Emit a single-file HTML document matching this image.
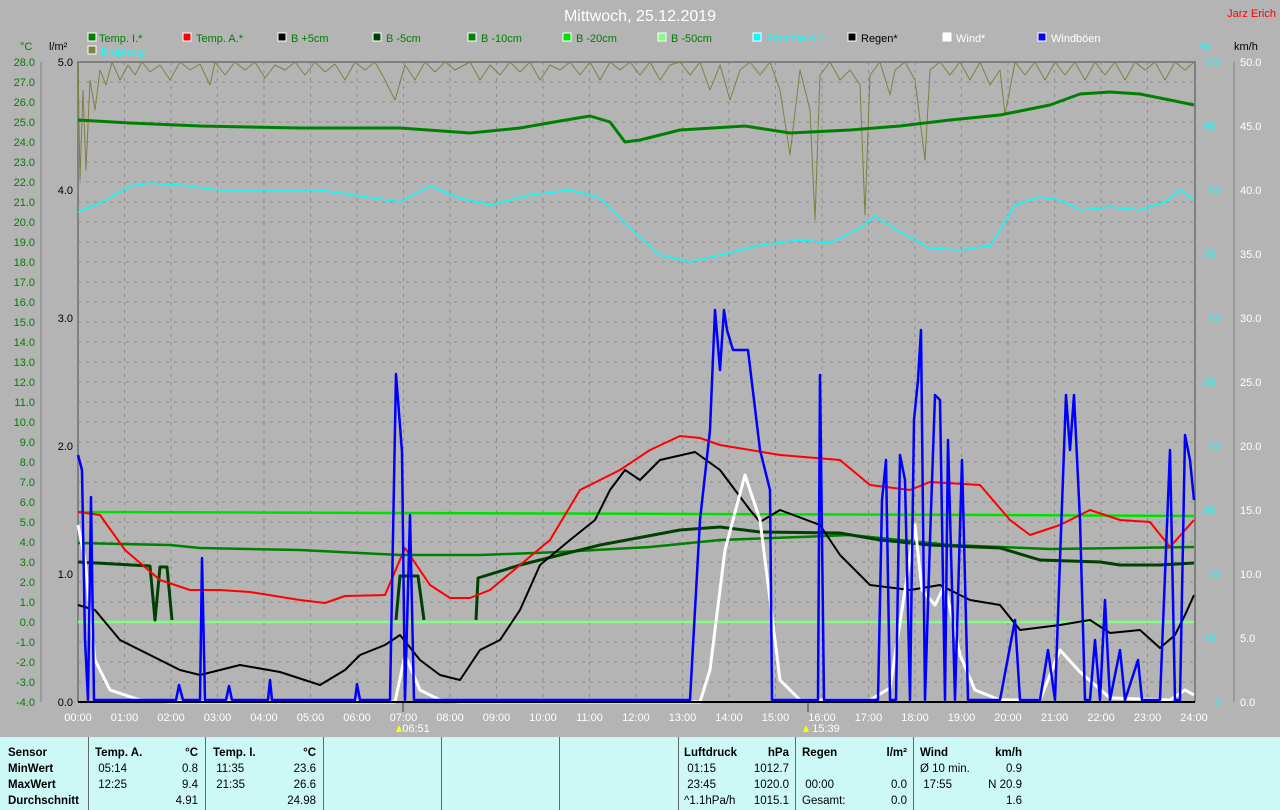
<!DOCTYPE html>
<html><head><meta charset="utf-8"><style>
body{margin:0;width:1280px;height:810px;background:#b4b4b4;overflow:hidden;font-family:"Liberation Sans",sans-serif;position:relative}
svg{position:absolute;left:0;top:0}
.tbl{position:absolute;left:0;top:737px;width:1280px;height:73px;background:#ccf9f5;font-size:11.5px;color:#000}
.tbl div{position:absolute}
.sep{top:0;height:73px;width:1px;background:#666}
b{font-weight:bold}
</style></head><body>
<svg width="1280" height="810" font-family="Liberation Sans, sans-serif">
<text x="640" y="21" fill="#fff" font-size="16" text-anchor="middle">Mittwoch, 25.12.2019</text>
<text x="1276" y="17" fill="#f00" font-size="11" text-anchor="end">Jarz Erich</text>
<g font-size="11">
<rect x="88" y="33" width="8" height="8" fill="#008000" stroke="#fff"/><text x="99" y="42" fill="#008000">Temp. I.*</text>
<rect x="183" y="33" width="8" height="8" fill="#f00" stroke="#fff"/><text x="196" y="42" fill="#008000">Temp. A.*</text>
<rect x="278" y="33" width="8" height="8" fill="#000" stroke="#fff"/><text x="291" y="42" fill="#008000">B +5cm</text>
<rect x="373" y="33" width="8" height="8" fill="#004000" stroke="#fff"/><text x="386" y="42" fill="#008000">B -5cm</text>
<rect x="468" y="33" width="8" height="8" fill="#008000" stroke="#fff"/><text x="481" y="42" fill="#008000">B -10cm</text>
<rect x="563" y="33" width="8" height="8" fill="#00e000" stroke="#fff"/><text x="576" y="42" fill="#008000">B -20cm</text>
<rect x="658" y="33" width="8" height="8" fill="#80ff80" stroke="#fff"/><text x="671" y="42" fill="#008000">B -50cm</text>
<rect x="753" y="33" width="8" height="8" fill="#0ff" stroke="#fff"/><text x="766" y="42" fill="#0ff">Feuchte A.*</text>
<rect x="848" y="33" width="8" height="8" fill="#000" stroke="#fff"/><text x="861" y="42" fill="#000">Regen*</text>
<rect x="943" y="33" width="8" height="8" fill="#fff" stroke="#fff"/><text x="956" y="42" fill="#fff">Wind*</text>
<rect x="1038" y="33" width="8" height="8" fill="#00f" stroke="#fff"/><text x="1051" y="42" fill="#fff">Windböen</text>
<rect x="88" y="46" width="8" height="8" fill="#808040" stroke="#fff"/><text x="101" y="55" fill="#0ff">Empfang</text>
<text x="20" y="50" fill="#008000">°C</text><text x="49" y="50" fill="#000">l/m²</text>
<text x="1200" y="50" fill="#0ff">%</text><text x="1234" y="50" fill="#000">km/h</text>
</g>
<!-- grid -->
<g stroke="#8a8a8a" stroke-dasharray="3,5" stroke-width="1">
<path d="M78 82H1194M78 102H1194M78 122H1194M78 142H1194M78 162H1194M78 182H1194M78 202H1194M78 222H1194M78 242H1194M78 262H1194M78 282H1194M78 302H1194M78 322H1194M78 342H1194M78 362H1194M78 382H1194M78 402H1194M78 422H1194M78 442H1194M78 462H1194M78 482H1194M78 502H1194M78 522H1194M78 542H1194M78 562H1194M78 582H1194M78 602H1194M78 622H1194M78 642H1194M78 662H1194M78 682H1194"/>
<path d="M124.5 62V702M171 62V702M217.5 62V702M264 62V702M310.5 62V702M357 62V702M403.5 62V702M450 62V702M496.5 62V702M543 62V702M589.5 62V702M636 62V702M682.5 62V702M729 62V702M775.5 62V702M822 62V702M868.5 62V702M915 62V702M961.5 62V702M1008 62V702M1054.5 62V702M1101 62V702M1147.5 62V702"/>
</g>
<path d="M78 702V62H1195V702" fill="none" stroke="#808080" stroke-width="2"/>
<path d="M403 702V712M808 702V712" stroke="#777" stroke-width="2"/>
<!-- axes -->
<path d="M41 62V702" stroke="#808080"/>
<path d="M1234 62V702" stroke="#808080"/>
<g font-size="11" fill="#008000" text-anchor="end">
<text x="35" y="66">28.0</text><text x="35" y="86">27.0</text><text x="35" y="106">26.0</text><text x="35" y="126">25.0</text><text x="35" y="146">24.0</text><text x="35" y="166">23.0</text><text x="35" y="186">22.0</text><text x="35" y="206">21.0</text><text x="35" y="226">20.0</text><text x="35" y="246">19.0</text><text x="35" y="266">18.0</text><text x="35" y="286">17.0</text><text x="35" y="306">16.0</text><text x="35" y="326">15.0</text><text x="35" y="346">14.0</text><text x="35" y="366">13.0</text><text x="35" y="386">12.0</text><text x="35" y="406">11.0</text><text x="35" y="426">10.0</text><text x="35" y="446">9.0</text><text x="35" y="466">8.0</text><text x="35" y="486">7.0</text><text x="35" y="506">6.0</text><text x="35" y="526">5.0</text><text x="35" y="546">4.0</text><text x="35" y="566">3.0</text><text x="35" y="586">2.0</text><text x="35" y="606">1.0</text><text x="35" y="626">0.0</text><text x="35" y="646">-1.0</text><text x="35" y="666">-2.0</text><text x="35" y="686">-3.0</text><text x="35" y="706">-4.0</text>
</g>
<g font-size="11" fill="#000" text-anchor="end">
<text x="73" y="66">5.0</text><text x="73" y="194">4.0</text><text x="73" y="322">3.0</text><text x="73" y="450">2.0</text><text x="73" y="578">1.0</text><text x="73" y="706">0.0</text>
</g>
<g font-size="11" fill="#0ff" text-anchor="end">
<text x="1221" y="66">100</text><text x="1221" y="194">80</text><text x="1221" y="322">60</text><text x="1221" y="450">40</text><text x="1221" y="578">20</text><text x="1221" y="706">0</text>
<text x="1216" y="130">90</text><text x="1216" y="258">70</text><text x="1216" y="386">50</text><text x="1216" y="514">30</text><text x="1216" y="642">10</text>
</g>
<g font-size="11" fill="#fff">
<text x="1240" y="66">50.0</text><text x="1240" y="130">45.0</text><text x="1240" y="194">40.0</text><text x="1240" y="258">35.0</text><text x="1240" y="322">30.0</text><text x="1240" y="386">25.0</text><text x="1240" y="450">20.0</text><text x="1240" y="514">15.0</text><text x="1240" y="578">10.0</text><text x="1240" y="642">5.0</text><text x="1240" y="706">0.0</text>
</g>
<g font-size="11" fill="#fff" text-anchor="middle">
<text x="78" y="721">00:00</text><text x="124.5" y="721">01:00</text><text x="171" y="721">02:00</text><text x="217.5" y="721">03:00</text><text x="264" y="721">04:00</text><text x="310.5" y="721">05:00</text><text x="357" y="721">06:00</text><text x="403.5" y="721">07:00</text><text x="450" y="721">08:00</text><text x="496.5" y="721">09:00</text><text x="543" y="721">10:00</text><text x="589.5" y="721">11:00</text><text x="636" y="721">12:00</text><text x="682.5" y="721">13:00</text><text x="729" y="721">14:00</text><text x="775.5" y="721">15:00</text><text x="822" y="721">16:00</text><text x="868.5" y="721">17:00</text><text x="915" y="721">18:00</text><text x="961.5" y="721">19:00</text><text x="1008" y="721">20:00</text><text x="1054.5" y="721">21:00</text><text x="1101" y="721">22:00</text><text x="1147.5" y="721">23:00</text><text x="1194" y="721">24:00</text>
<text x="416" y="732">06:51</text><text x="826" y="732">15:39</text>
</g>
<path d="M399 725l3 7h-6z" fill="#ff0"/><path d="M806 725l3 7h-6z" fill="#ff0"/>
<!-- series -->
<g fill="none" stroke-linejoin="round">
<polyline stroke="#808040" stroke-width="1" points="78,62 80,180 83,90 86,170 90,80 95,110 100,70 106,85 112,62 120,80 128,65 135,75 142,62 150,72 160,65 170,80 180,62 190,70 200,64 210,85 215,62 225,75 235,62 245,70 255,62 265,78 275,65 285,70 295,62 305,75 315,62 325,72 335,64 345,80 355,62 365,70 375,62 385,80 395,100 405,65 415,80 425,62 435,72 445,62 455,70 470,62 480,80 490,65 500,75 510,62 520,72 530,62 540,80 550,65 560,70 570,62 580,75 590,62 600,80 610,62 620,70 630,62 640,75 650,62 660,80 670,65 680,62 690,75 700,62 710,90 720,65 730,100 740,70 750,62 760,75 770,62 780,90 790,155 800,70 810,110 815,220 820,75 830,62 840,80 850,70 860,85 865,215 870,75 880,62 890,95 895,70 905,62 915,80 925,160 930,70 940,62 950,75 960,62 970,80 980,62 990,85 1000,70 1005,115 1015,62 1025,75 1035,62 1045,80 1055,62 1065,75 1075,62 1085,80 1095,62 1105,75 1115,62 1125,80 1135,62 1145,70 1155,62 1165,80 1175,62 1185,70 1194,62"/>
<polyline stroke="#0ff" stroke-width="1.5" points="78,212 95,205 110,198 130,186 150,183 180,185 220,190 280,190 320,190 360,196 400,202 430,186 460,198 490,205 530,195 570,190 600,198 630,228 660,255 690,262 720,255 760,245 800,240 830,243 860,228 875,216 900,232 930,248 960,250 990,246 1015,205 1040,197 1060,200 1080,210 1110,207 1140,210 1165,202 1180,190 1194,200"/>
<polyline stroke="#008000" stroke-width="3" points="78,120 130,123 200,126 300,128 400,128 470,133 520,128 560,121 590,116 610,122 625,142 640,140 680,130 745,126 790,133 850,130 900,126 950,120 1000,115 1050,105 1080,94 1110,92 1140,94 1170,100 1194,105"/>
<polyline stroke="#80ff80" stroke-width="2.5" points="78,622 1194,622"/>
<polyline stroke="#00e000" stroke-width="2.5" points="78,512 400,513 700,514 1000,515 1194,516"/>
<polyline stroke="#008000" stroke-width="2.5" points="78,543 170,545 200,548 300,550 400,555 480,555 560,552 650,547 720,540 800,537 850,535 900,540 950,545 1050,549 1194,547"/>
<polyline stroke="#004000" stroke-width="3" points="78,562 150,566 155,620 160,567 167,567 172,620"/>
<polyline stroke="#004000" stroke-width="3" points="396,620 400,576 418,576 424,620"/>
<polyline stroke="#004000" stroke-width="3" points="476,620 478,578 520,565 600,545 680,530 720,527 760,532 840,533 880,540 930,545 1000,548 1040,560 1100,562 1120,565 1160,565 1194,563"/>
<polyline stroke="#f00" stroke-width="2" points="78,512 100,515 125,550 160,580 190,590 220,590 250,592 300,600 325,603 345,596 385,595 405,548 430,585 450,598 470,598 490,590 520,565 550,540 580,490 620,470 650,450 680,436 700,438 720,445 780,455 840,460 870,485 910,490 930,482 980,485 1010,520 1030,535 1060,525 1090,510 1120,520 1150,522 1170,547 1194,520"/>
<polyline stroke="#000" stroke-width="2" points="78,605 95,610 120,640 160,660 180,670 200,675 240,665 280,672 320,685 345,670 360,655 385,645 400,635 420,660 440,675 460,680 480,650 500,640 520,610 540,565 570,540 595,520 610,490 625,470 640,480 660,460 695,452 720,470 750,510 760,522 780,510 820,525 840,555 870,585 910,590 940,585 970,600 1000,605 1020,630 1060,625 1090,620 1110,633 1140,630 1160,648 1175,635 1185,615 1194,595"/>
<polyline stroke="#fff" stroke-width="3" points="78,525 85,560 95,660 110,690 140,700 170,702 395,702 405,655 420,690 440,700 460,702 700,702 710,670 725,550 745,475 760,520 770,600 780,680 800,700 870,700 890,688 915,525 922,590 935,605 945,585 960,655 975,690 1000,700 1040,700 1060,650 1080,672 1110,698 1170,700 1185,690 1194,695"/>
<polyline stroke="#00f" stroke-width="2.5" points="78,455 82,470 85,640 88,700 91,497 94,700 100,700 176,700 179,685 183,700 200,700 202,558 205,700 226,700 229,686 232,700 268,700 270,680 272,700 355,700 357,684 360,700 390,700 396,374 402,452 405,700 410,515 414,700 686,700 690,700 700,520 710,430 715,310 720,370 724,310 727,330 733,350 748,350 760,450 770,490 772,700 818,700 820,375 824,700 878,700 882,500 886,460 890,700 896,700 900,455 905,480 910,700 914,420 918,380 921,330 925,700 930,540 935,395 940,400 945,700 948,440 955,700 962,460 968,700 975,700 1000,700 1015,620 1020,700 1040,700 1048,650 1055,700 1060,560 1066,395 1070,450 1074,395 1080,520 1085,700 1090,700 1095,640 1100,700 1105,600 1110,700 1120,650 1125,700 1138,660 1142,700 1160,700 1170,450 1175,700 1180,700 1185,435 1190,460 1194,500"/>
</g>
<path d="M78 702H1195" stroke="#000" stroke-width="2"/>
</svg>
<div class="tbl">
<div class="sep" style="left:88px"></div><div class="sep" style="left:205px"></div><div class="sep" style="left:323px"></div><div class="sep" style="left:441px"></div><div class="sep" style="left:559px"></div><div class="sep" style="left:678px"></div><div class="sep" style="left:795px"></div><div class="sep" style="left:913px"></div>
<div style="left:8px;top:8px;line-height:16px"><b>Sensor</b><br><b>MinWert</b><br><b>MaxWert</b><br><b>Durchschnitt</b></div>
<div style="left:95px;top:8px;line-height:16px"><b>Temp. A.</b><br>&nbsp;05:14<br>&nbsp;12:25</div>
<div style="left:160px;top:8px;width:38px;text-align:right;line-height:16px"><b>°C</b><br>0.8<br>9.4<br>4.91</div>
<div style="left:213px;top:8px;line-height:16px"><b>Temp. I.</b><br>&nbsp;11:35<br>&nbsp;21:35</div>
<div style="left:276px;top:8px;width:40px;text-align:right;line-height:16px"><b>°C</b><br>23.6<br>26.6<br>24.98</div>
<div style="left:684px;top:8px;line-height:16px"><b>Luftdruck</b><br>&nbsp;01:15<br>&nbsp;23:45<br>^1.1hPa/h</div>
<div style="left:740px;top:8px;width:49px;text-align:right;line-height:16px"><b>hPa</b><br>1012.7<br>1020.0<br>1015.1</div>
<div style="left:802px;top:8px;line-height:16px"><b>Regen</b><br>&nbsp;<br>&nbsp;00:00<br>Gesamt:</div>
<div style="left:860px;top:8px;width:47px;text-align:right;line-height:16px"><b>l/m²</b><br>&nbsp;<br>0.0<br>0.0</div>
<div style="left:920px;top:8px;line-height:16px"><b>Wind</b><br>Ø 10 min.<br>&nbsp;17:55</div>
<div style="left:970px;top:8px;width:52px;text-align:right;line-height:16px"><b>km/h</b><br>0.9<br>N 20.9<br>1.6</div>
</div>
</body></html>
